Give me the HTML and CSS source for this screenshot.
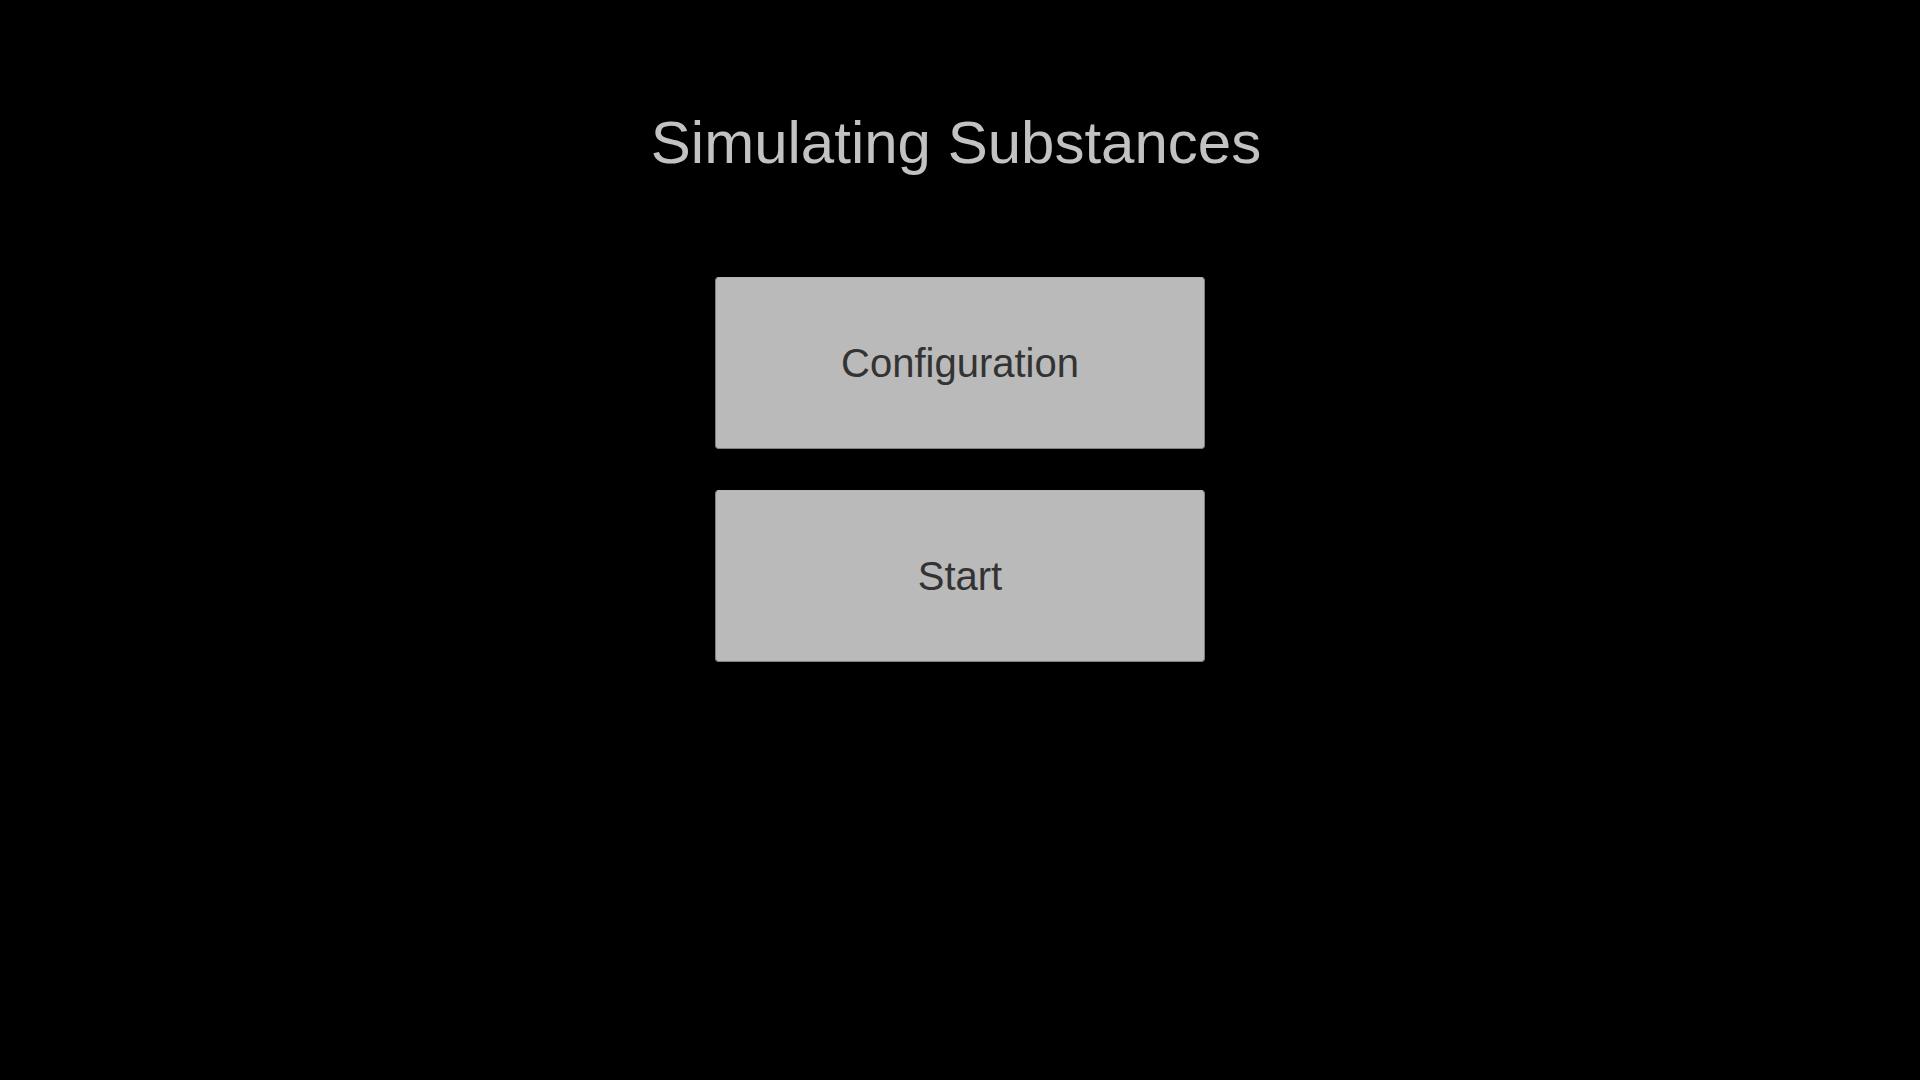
FILE: index.html
```html
<!DOCTYPE html>
<html lang="en">
<head>
<meta charset="utf-8">
<title>Simulating Substances</title>
<link rel="stylesheet" href="styles.css">
</head>
<body>
<main class="menu">
  <h1 class="title">Simulating Substances</h1>
  <button class="menu-button" type="button">Configuration</button>
  <button class="menu-button" type="button">Start</button>
</main>
</body>
</html>
```
FILE: styles.css
```css
body {
  margin: 0;
  background: #000;
  font-family: "Liberation Sans", Arial, sans-serif;
}

.menu {
  display: flex;
  flex-direction: column;
  align-items: center;
  gap: 41px;
  padding: 108px 16px 40px;
}

.title {
  margin: 0 8px 59px 0;
  color: #c2c2c2;
  font-size: 60px;
  font-weight: 400;
  line-height: 69px;
}

.menu-button {
  box-sizing: border-box;
  width: 490px;
  max-width: 100%;
  padding: 62px 24px;
  border: 1px solid #808080;
  border-top-color: #b4b4b4;
  border-radius: 4px;
  background: #bababa;
  color: #333;
  font-family: inherit;
  font-size: 40px;
  line-height: 46px;
}
```
